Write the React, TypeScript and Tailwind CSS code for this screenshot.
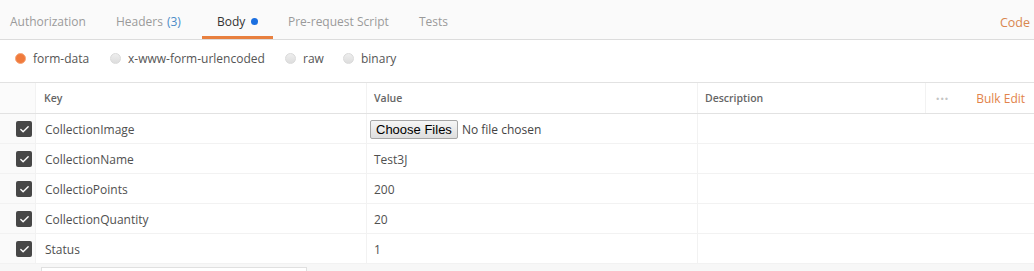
import { Check } from 'lucide-react'

const rows = [
  { key: 'CollectionImage', value: null },
  { key: 'CollectionName', value: 'Test3J' },
  { key: 'CollectioPoints', value: '200' },
  { key: 'CollectionQuantity', value: '20' },
  { key: 'Status', value: '1' },
]

function Radio({ active }: { active?: boolean }) {
  return active ? (
    <span className="mr-[7px] inline-block h-[11px] w-[11px] rounded-full border border-[#f6a77a] bg-[#f07a3c]" />
  ) : (
    <span className="mr-[7px] inline-block h-[11px] w-[11px] rounded-full border border-[#dadada] bg-gradient-to-b from-[#eeeeee] to-[#dddddd]" />
  )
}

export default function App() {
  return (
    <div className="h-[271px] w-[1034px] overflow-hidden bg-white font-['Open_Sans',sans-serif] text-[12px] text-[#505050]">
      {/* tabs */}
      <div className="flex h-[40px] items-stretch border-b border-[#dcdcdc] bg-[#fafafa]">
        <div className="flex w-[106px] items-center pl-[10px] pt-[4px] text-[#9a9a9a]">Authorization</div>
        <div className="flex w-[96px] items-center pl-[10px] pt-[4px] text-[#9a9a9a]">
          Headers <span className="ml-1 text-[#4b8bc7]">(3)</span>
        </div>
        <div className="relative flex w-[71px] items-center pl-[15px] pt-[4px] text-[#333]">
          Body
          <span className="ml-[6px] inline-block h-[7px] w-[7px] rounded-full bg-[#1b6fe0]" />
          <span className="absolute bottom-0 left-0 right-0 h-[3px] bg-[#e8803f]" />
        </div>
        <div className="flex w-[131px] items-center pl-[15px] pt-[4px] text-[#9a9a9a]">Pre-request Script</div>
        <div className="flex items-center pl-[15px] pt-[4px] text-[#9a9a9a]">Tests</div>
        <div className="ml-auto flex items-center pr-[4px] pt-[7px] text-[12.5px] text-[#d9864f]">Code</div>
      </div>

      {/* body types */}
      <div className="flex h-[42px] items-center pb-[5px] pl-[15px] text-[#555]">
        <label className="flex w-[95px] items-center">
          <Radio active />
          form-data
        </label>
        <label className="flex w-[175px] items-center">
          <Radio />
          x-www-form-urlencoded
        </label>
        <label className="flex w-[58px] items-center">
          <Radio />
          raw
        </label>
        <label className="flex items-center">
          <Radio />
          binary
        </label>
      </div>

      {/* table */}
      <div className="border-t border-[#e2e2e2]">
        <div className="flex h-[31px] border-b border-[#e2e2e2] text-[10.5px] font-semibold text-[#666]">
          <div className="w-[36px] border-r border-[#f2f2f2] bg-[#fbfbfb]" />
          <div className="flex w-[331px] items-center border-r border-[#f2f2f2] pl-[8px] pt-[1px]">Key</div>
          <div className="flex w-[331px] items-center border-r border-[#f2f2f2] pl-[7px] pt-[1px]">Value</div>
          <div className="flex w-[228px] items-center border-r border-[#f2f2f2] pl-[7px] pt-[1px]">Description</div>
          <div className="flex flex-1 items-center pt-[1px]">
            <span className="ml-[10px] text-[9px] tracking-[1px] text-[#c4c4c4]">•••</span>
            <span className="ml-[27px] text-[12px] font-normal text-[#e2834a]">Bulk Edit</span>
          </div>
        </div>
        {rows.map((r) => (
          <div key={r.key} className="flex h-[30px] border-b border-[#f2f2f2]">
            <div className="flex w-[36px] items-center justify-end border-r border-[#f2f2f2] bg-[#fafafa] pr-[3px] pt-[1px]">
              <span className="flex h-[16px] w-[16px] items-center justify-center rounded-[2px] bg-[#474747]">
                <Check size={11} strokeWidth={3} color="#fff" />
              </span>
            </div>
            <div className="flex w-[331px] items-center border-r border-[#f2f2f2] pl-[9px] pt-[2px]">{r.key}</div>
            <div className="flex w-[331px] items-center border-r border-[#f2f2f2] pl-[7px] pt-[2px]">
              {r.value === null ? (
                <span className="-ml-[4px] flex items-center">
                  <span className="rounded-[2px] border border-[#a6a6a6] bg-gradient-to-b from-[#f6f6f6] to-[#dedede] px-[5px] font-['Liberation_Sans',sans-serif] text-[13px] leading-[17px] text-black">
                    Choose Files
                  </span>
                  <span className="ml-[4px] text-[#444]">No file chosen</span>
                </span>
              ) : (
                r.value
              )}
            </div>
            <div className="flex-1" />
          </div>
        ))}
        <div className="flex h-[10px] bg-[#f7f7f7] pl-[41px] pt-[3px]">
          <div className="h-[10px] w-[266px] border border-[#e0e0e0] bg-white" />
        </div>
      </div>
    </div>
  )
}
